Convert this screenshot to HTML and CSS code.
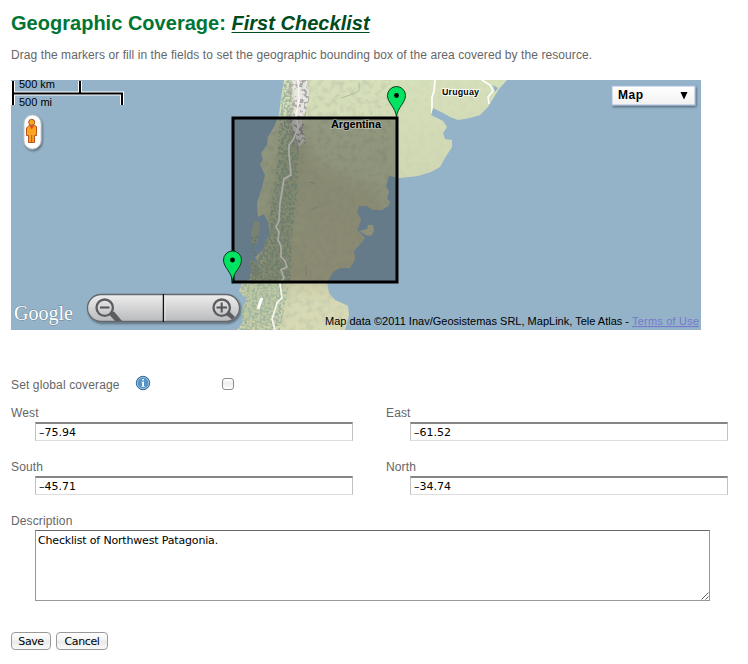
FILE: index.html
```html
<!DOCTYPE html>
<html lang="en">
<head>
<meta charset="utf-8">
<title>Geographic Coverage</title>
<link rel="stylesheet" href="styles.css">
</head>
<body>
<main class="page">
<h1 class="title">Geographic Coverage: <a class="resource" href="#">First Checklist</a></h1>
<p class="intro">Drag the markers or fill in the fields to set the geographic bounding box of the area covered by the resource.</p>
<svg class="map" viewBox="11 80 690 250" width="690" height="250">
  <defs>
    <linearGradient id="land" x1="0" y1="0" x2="0" y2="1"><stop offset="0" stop-color="#d6e0ba"/><stop offset=".45" stop-color="#ced6b2"/><stop offset="1" stop-color="#d8dab5"/></linearGradient>
    <linearGradient id="steel" x1="0" y1="0" x2="0" y2="1"><stop offset="0" stop-color="#eee"/><stop offset="1" stop-color="#b9babc"/></linearGradient>
    <linearGradient id="menu" x1="0" y1="0" x2="0" y2="1"><stop offset="0" stop-color="#fff"/><stop offset="1" stop-color="#f1f1f1"/></linearGradient>
    <filter id="soft" x="-30%" y="-10%" width="160%" height="120%"><feGaussianBlur stdDeviation="7"/></filter>
    <filter id="grain" x="0" y="0" width="100%" height="100%"><feTurbulence type="fractalNoise" baseFrequency=".16" numOctaves="4" seed="8"/><feColorMatrix values="0 0 0 0 .5  0 0 0 0 .52  0 0 0 0 .4  3 0 0 0 -1.35"/></filter>
    <filter id="forest" x="0" y="0" width="100%" height="100%"><feTurbulence type="fractalNoise" baseFrequency=".38" numOctaves="2" seed="3" result="n"/><feColorMatrix values="0 0 0 0 .34  0 0 0 0 .46  0 0 0 0 .34  7 0 0 0 -3.1"/><feComposite in2="SourceGraphic" operator="in"/></filter>
    <filter id="snow" x="0" y="0" width="100%" height="100%"><feTurbulence type="fractalNoise" baseFrequency=".25" numOctaves="3" seed="12"/><feColorMatrix values="0 0 0 0 .42  0 0 0 0 .4  0 0 0 0 .4  9 0 0 0 -4.5"/><feComposite in2="SourceGraphic" operator="in"/></filter>
    <filter id="shade" x="-20%" y="-20%" width="150%" height="160%"><feDropShadow dx="1" dy="1.500" stdDeviation=".9" flood-color="#000" flood-opacity=".45"/></filter>
    <path id="coast" d="M284 80L281 98 279 115 274 127 268 137 267 145 261 153 263 160 260 164 265 175 262 188 257 203 258 217 264 214 268 222 270 233 266 241 263 250 255 257 259 264 251 271 250 279 242 284 239 291 247 300 241 310 243 322 237 330H345L349 315 348 306 342 303 335 300 329 293 327 283 330 277 333 272 340 268 350 268 355 259 354 251 361 243 365 238 357 230 361 220 357 212 359 206 367 206 373 210 382 210 388 206 390 202 387 198 389 192 386 186 389 176 400 178 418 176 431 172 440 167 445 158 452 147 452 140 445 139 443 133 447 127 443 121 431 115 433 108 443 113 450 117 458 120 470 118 480 115 488 107 494 97 499 89 507 80Z"/>
    <clipPath id="landClip"><use href="#coast"/></clipPath>
    <g id="pin"><path d="M0 2C-1-8-9-12-9-19.500A9 9 0 0 1 9-19.500C9-12 1-8 0 2Z" fill="#00e461" stroke="#063d20" stroke-width="1"/><circle cy="-19.500" r="2.400"/></g>
  </defs>
  <rect x="11" y="80" width="690" height="250" fill="#94b3c9"/>
  <use href="#coast" fill="url(#land)"/>
  <path d="M254 221L260 222 259 232 257 243 252 244 251 235ZM250 260L258 262 260 275 252 276Z" fill="#b0bda6"/>
  <path d="M359 231L367 229 368 225H373L374 231 371 236 366 235Z" fill="#ced1b0"/>
  <g clip-path="url(#landClip)">
    <path d="M290 120L320 165 380 195 390 240 345 290H280L300 230Z" fill="#bdb591" opacity=".4" filter="url(#soft)"/>
    <rect x="260" y="80" width="130" height="250" filter="url(#grain)" opacity=".5"/>
    <rect x="380" y="80" width="128" height="100" filter="url(#grain)" opacity=".12"/>
    <path d="M287 125L301 140 296 183 292 210 293 250 285 285 276 330H237V285L262 265 269 220 276 180Z" fill="#8da37c" opacity=".3" filter="url(#soft)"/>
    <path d="M284 80H292V120L299 145 297 200 292 235 291 275 280 330H237V285L258 260 269 220 276 175 280 110Z" fill="#000" filter="url(#forest)" opacity=".9"/>
    <path d="M292 80H307L309 95 302 122 305 140 299 147 292 125 295 108Z" fill="#e9e6e4" opacity=".9"/>
    <path d="M289 80H308L310 95 304 122 307 142 295 150 287 122Z" filter="url(#snow)"/>
    <path d="M258 309L260 303 262 298" fill="none" stroke="#fff" stroke-width="3"/>
    <path d="M298 80L299 100 296 115 298 128 293 140 289 145 289 154 291 175 284 179 280 203 279 221 276 227 279 232 278 240 281 246 281 257 285 261 287 267 281 270 284 278 280 284 282 298 277 303 272 319 275 330" fill="none" stroke="#f7f7f2" stroke-width="1.700"/>
    <path d="M435 80L434 91 432 97V115M482 80L490 85 493 91 488 97 489 104" fill="none" stroke="#fff" stroke-width="1.600"/>
    <path d="M493 85L498 88 495 92Z" fill="#94b3c9"/>
    <path d="M359 82V91L353 94 341 98M309 182L316 184M311 210L318 207M306 265V275" fill="none" stroke="#98a887" opacity=".6"/>
  </g>
  <path d="M251 238L256 237 252 250 256 256M251 263L257 267" stroke="#92aa91" stroke-width="2" fill="none" stroke-dasharray="2 2"/>
  <rect x="233" y="118" width="164" height="164" fill="#000" fill-opacity=".31" stroke="#000" stroke-width="3"/>
  <use href="#pin" x="396.500" y="115"/><use href="#pin" x="232.500" y="279.500"/>
  <g class="country"><text x="331" y="128" textLength="50">Argentina</text><text class="small" x="442" y="95" textLength="37">Uruguay</text></g>
  <g class="scale">
    <path d="M13 81V105M12 93.500H122V105M80 93V81" fill="none" stroke="#fff" stroke-width="4"/>
    <path d="M13 81V105M12 93.500H122V105M80 93V81" fill="none" stroke="#000" stroke-width="2"/>
    <text x="19" y="88" textLength="36">500 km</text><text x="19" y="106" textLength="33">500 mi</text>
  </g>
  <g>
    <rect x="24" y="115" width="17" height="34" rx="8.500" fill="#fff" stroke="#c5c8ca" filter="url(#shade)"/>
    <path d="M28 126.500L29.500 125H34L36.500 126.500V135.500H34.500V142.500H28.500V135.500H26.500V128Z" fill="#fba422" stroke="#b5551c"/>
    <path d="M29.500 126H34L31.700 129.500Z" fill="#f04a20"/><path d="M31.700 135V142" stroke="#b5551c"/>
    <circle cx="31.700" cy="122.300" r="3" fill="#f9a824" stroke="#a8501c"/>
  </g>
  <text class="brand" x="14" y="320" textLength="59" lengthAdjust="spacingAndGlyphs">Google</text>
  <g>
    <rect x="87.500" y="294.500" width="152" height="27" rx="13.500" fill="url(#steel)" stroke="#64686c" stroke-width="1.300" filter="url(#shade)"/>
    <path d="M163.500 294V322" stroke="#111" stroke-width="1.500"/><path d="M164.800 295V321" stroke="#fff" stroke-width=".8"/>
    <path d="M111.500 312.500L114 311.500 122 321H115L109.500 315Z" fill="#5c5d60"/>
    <circle cx="104.700" cy="307.700" r="8.200" fill="none" stroke="#5c5d60" stroke-width="2.300"/><path d="M100 307.500H109.500" stroke="#555" stroke-width="2"/>
    <path d="M227 313L230 312 235 317 232 319.500 226 315Z" fill="#5c5d60"/>
    <circle cx="221.700" cy="307.700" r="8.200" fill="none" stroke="#5c5d60" stroke-width="2.300"/><path d="M216.500 307.500H227M221.700 302.500V312.500" stroke="#555" stroke-width="2"/>
  </g>
  <g class="menu"><rect x="612" y="86" width="83" height="19" fill="url(#menu)" stroke="#a9bddd" filter="url(#shade)"/><text x="618" y="99" textLength="25">Map</text><path d="M680.500 92H687.500L684 99.500Z"/></g>
  <g class="credits"><text x="325" y="325" textLength="304">Map data ©2011 Inav/Geosistemas SRL, MapLink, Tele Atlas -</text><text class="terms" x="632" y="325" textLength="67">Terms of Use</text></g>
</svg>
<form class="coverage">
  <div class="global">
    <label for="global">Set global coverage</label>
    <svg class="info" viewBox="0 0 16 16" width="16" height="16"><circle cx="8" cy="8" r="6.700" fill="#5694c6" stroke="#326894"/><circle cx="8" cy="8" r="5.700" fill="none" stroke="#a7cae3" stroke-width=".8"/><path d="M7.200 4H9V5.500H7.200ZM6.500 6.700H9V11H9.700V11.800H6.500V11H7.200V7.500H6.500Z" fill="#fff"/></svg>
    <input class="check" id="global" type="checkbox">
  </div>
  <div class="bounds">
    <div class="field"><label for="west">West</label><input id="west" value="–75.94"></div>
    <div class="field"><label for="east">East</label><input id="east" value="–61.52"></div>
    <div class="field"><label for="south">South</label><input id="south" value="–45.71"></div>
    <div class="field"><label for="north">North</label><input id="north" value="–34.74"></div>
  </div>
  <div class="description">
    <label for="description">Description</label>
    <div class="area"><textarea id="description">Checklist of Northwest Patagonia.</textarea><svg class="grip" viewBox="0 0 8 8" width="8" height="8"><path d="M.5 7.500L7.500.5M4.500 7.500L7.500 4.500" stroke="#555" stroke-width=".9"/></svg></div>
  </div>
  <div class="actions"><button class="save" type="button">Save</button><button class="cancel" type="button">Cancel</button></div>
</form>
</main>
</body>
</html>
```
FILE: styles.css
```css
* { box-sizing: border-box; }
body { margin: 0; background: #fff; color: #666; font: 12px/16px "Liberation Sans", Arial, sans-serif; }
.page { width: 748px; height: 664px; padding: 11px 11px 0; overflow: hidden; }
.title { margin: 0; font-size: 20px; line-height: 24px; letter-spacing: .02px; color: #007534; white-space: nowrap; }
.resource { color: #004b20; font-style: italic; text-decoration-thickness: 1px; text-underline-offset: 2px; }
.intro { margin: 12px 0 17px; letter-spacing: .08px; white-space: nowrap; }
.map { display: block; overflow: visible; font: 11px "Liberation Sans", Arial, sans-serif; fill: #000; }
.country text { font-weight: bold; paint-order: stroke; stroke: #fff; stroke-opacity: .3; stroke-width: 2px; }
.country .small { font-size: 9px; stroke-opacity: .8; }
.scale text { font-size: 11px; }
.brand { font: 22px "Liberation Serif", serif; fill: #fff; paint-order: stroke; stroke: #708594; stroke-width: 1px; }
.menu text { font-size: 12px; font-weight: bold; }
.terms { fill: #7777cc; text-decoration: underline; }
.coverage { margin-top: 46px; }
.coverage label { letter-spacing: .13px; }
.global { display: flex; align-items: flex-start; height: 29px; }
.global label { width: 124px; padding-top: 1px; }
.info { margin-top: -1px; }
.check { appearance: none; width: 12px; height: 12px; margin: 2px 0 0 71px; border: 1px solid #8c8c8c; border-radius: 3px; background: linear-gradient(#fff, #eee 45%, #fff); }
.bounds { display: grid; grid-template-columns: 342px 342px; column-gap: 33px; }
.field { height: 54px; }
.field label { display: block; }
.field input { display: block; width: 318px; height: 19px; margin: 1px 0 0 24px; padding: 1px 3px 0; border: 1px solid #c1c1c1; border-top: 2px solid #858585; border-bottom-color: #ddd; }
.field input, textarea, button { font: 11px/15px "DejaVu Sans", sans-serif; color: #000; }
.description label { display: block; height: 17px; }
.area { position: relative; width: 675px; margin-left: 24px; }
textarea { display: block; width: 675px; height: 71px; padding: 2px; border: 1px solid #999; border-top-color: #666; resize: none; letter-spacing: -.17px; overflow: hidden; }
.grip { position: absolute; right: 1px; bottom: 1px; }
.actions { display: flex; gap: 5px; margin-top: 31px; }
button { height: 18px; padding: 0; border: 1px solid #999; border-radius: 4px; background: linear-gradient(#fff, #f4f4f4 45%, #e9e9e9 50%, #fafafa); white-space: nowrap; letter-spacing: -.4px; }
.save { width: 40px; }
.cancel { width: 52px; }
```
